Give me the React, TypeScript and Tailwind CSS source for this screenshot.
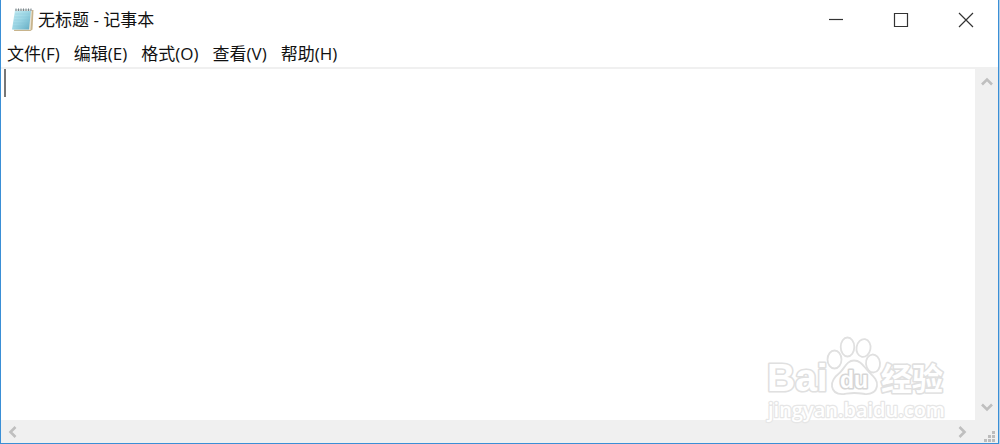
import type { ReactNode } from 'react';

const MENUS = ['文件(F)', '编辑(E)', '格式(O)', '查看(V)', '帮助(H)'];

const CHEVRONS = {
  up: 'M1 8.500 6 3.500l5 5',
  down: 'M1 3.500l5 5 5-5',
  left: 'M8.500 1 3.500 6l5 5',
  right: 'M3.500 1l5 5-5 5',
};

function NotepadIcon() {
  return (
    <svg className="h-6 w-6" viewBox="0 0 24 24" aria-hidden="true">
      <defs>
        <linearGradient id="page" x1="0" y1="0" x2="1" y2="1">
          <stop offset="0" stopColor="#c9eef5" />
          <stop offset="0.5" stopColor="#9bd5e4" />
          <stop offset="1" stopColor="#5fa9c1" />
        </linearGradient>
      </defs>
      <path d="M5 2h17.500l-1 19.500-2 1.500H3z" fill="#c8b48c" />
      <path d="M4.500 2H21l-1.500 20H2.500z" fill="#e9e4d6" />
      <path d="M4 2h16l-2 19.500H1z" fill="url(#page)" />
      <path d="M4 6h15M3.600 9h15M3.200 12h15M2.700 15h15M2.200 18h15" stroke="#82c3d5" strokeWidth="0.500" opacity="0.7" />
      <path d="M4 2h16" stroke="#d8dcda" strokeWidth="2" />
      <path d="M5 .5v2.500M7.500 .5v2.500M10 .5v2.500M12.500 .5v2.500M15 .5v2.500M17.500 .5v2.500M20 .5v2.500" stroke="#77838a" strokeWidth="1" />
    </svg>
  );
}

function CaptionButton({ label, children }: { label: string; children: ReactNode }) {
  return (
    <button type="button" aria-label={label} className="flex w-[65px] items-center justify-center">
      <svg className="h-4 w-4" viewBox="0 0 16 16" fill="none" stroke="#333333" strokeWidth="1.200">
        {children}
      </svg>
    </button>
  );
}

function ScrollArrow({ label, direction }: { label: string; direction: keyof typeof CHEVRONS }) {
  return (
    <button type="button" aria-label={label} className="flex h-6 w-6 items-center justify-center">
      <svg className="h-3 w-3" viewBox="0 0 12 12" fill="none" stroke="#bfbfbf" strokeWidth="2.600">
        <path d={CHEVRONS[direction]} />
      </svg>
    </button>
  );
}

function Watermark() {
  return (
    <svg
      className="pointer-events-none absolute right-[46px] bottom-[15px] h-[94px] w-[190px]"
      viewBox="0 0 190 94"
      fill="#ffffff"
      stroke="#e0e0e0"
      strokeWidth="1.800"
      strokeLinejoin="round"
    >
      <g>
        <ellipse cx="72.500" cy="25.500" rx="7" ry="9" />
        <ellipse cx="85.500" cy="13" rx="6.800" ry="9.500" />
        <ellipse cx="101.500" cy="14" rx="7" ry="9" transform="rotate(10 101.500 14)" />
        <ellipse cx="111" cy="29.500" rx="7" ry="9" transform="rotate(-5 111 29.500)" />
        <path d="M92 26.500c-7 0-9 7-14 12-5 4-9 8-8 14 1 6 6 8 12 7.500 4-.5 7-1 10-1s7 .5 11 1c6 .5 11-2 12-8 1-6-4-10-8-14-5-5-8-11.500-15-11.500z" />
      </g>
      <g fontWeight="700" paintOrder="stroke" strokeWidth="3.200">
        <text x="5" y="57" fontSize="39" fontFamily="Liberation Sans, sans-serif">Bai</text>
        <text x="78" y="54" fontSize="23" stroke="#d6d6d6" fontFamily="Liberation Sans, sans-serif">du</text>
        <text x="119" y="56" fontSize="31" fontFamily="Noto Sans CJK SC, sans-serif">经验</text>
        <text x="6" y="83" fontSize="20" fontWeight="600" strokeWidth="2.400" stroke="#e6e6e6" fontFamily="Open Sans, sans-serif">
          jingyan.baidu.com
        </text>
      </g>
    </svg>
  );
}

export default function App() {
  return (
    <div className="flex min-h-screen flex-col border-r border-[#b4d0e8]">
      <div className="relative flex flex-1 flex-col border-x border-b border-[#3a8fd6] bg-white font-['Open_Sans','Noto_Sans_CJK_SC',sans-serif] text-[17px] leading-6 text-[#111111]">
        <header className="flex h-10 pl-[10px]">
          <div className="flex items-center gap-[3px]">
            <NotepadIcon />
            <h1>无标题 - 记事本</h1>
          </div>
          <div className="ml-auto flex">
            <CaptionButton label="最小化">
              <path d="M1 7.500h14" />
            </CaptionButton>
            <CaptionButton label="最大化">
              <path d="M1.500 1.500h13v13h-13z" />
            </CaptionButton>
            <CaptionButton label="关闭">
              <path d="m1 1 14 14M15 1 1 15" />
            </CaptionButton>
          </div>
        </header>

        <nav className="flex h-[29px] items-center gap-[14px] border-b-2 border-[#f0f0f0] px-[6px]">
          {MENUS.map((menu) => (
            <button key={menu} type="button">
              {menu}
            </button>
          ))}
        </nav>

        <main className="flex flex-1">
          <div className="relative flex flex-1">
            <textarea aria-label="文本编辑器" className="flex-1 resize-none px-1 outline-none" />
            <span className="absolute top-0 left-[3px] h-7 w-[2px] bg-[#777777]" />
          </div>
          <div className="flex w-[23px] flex-col items-center justify-between bg-[#f0f0f0] py-px">
            <ScrollArrow label="向上滚动" direction="up" />
            <ScrollArrow label="向下滚动" direction="down" />
          </div>
        </main>

        <footer className="flex h-[23px] bg-[#f0f0f0]">
          <div className="flex flex-1 items-center justify-between pr-px">
            <ScrollArrow label="向左滚动" direction="left" />
            <ScrollArrow label="向右滚动" direction="right" />
          </div>
          <svg className="h-[23px] w-[23px]" viewBox="0 0 23 23" fill="#bcbcbc" aria-hidden="true">
            <path d="M17 11h3v3h-3zM13 15h3v3h-3zM17 15h3v3h-3zM9 19h3v3H9zM13 19h3v3h-3zM17 19h3v3h-3z" />
          </svg>
        </footer>

        <Watermark />
      </div>
    </div>
  );
}
